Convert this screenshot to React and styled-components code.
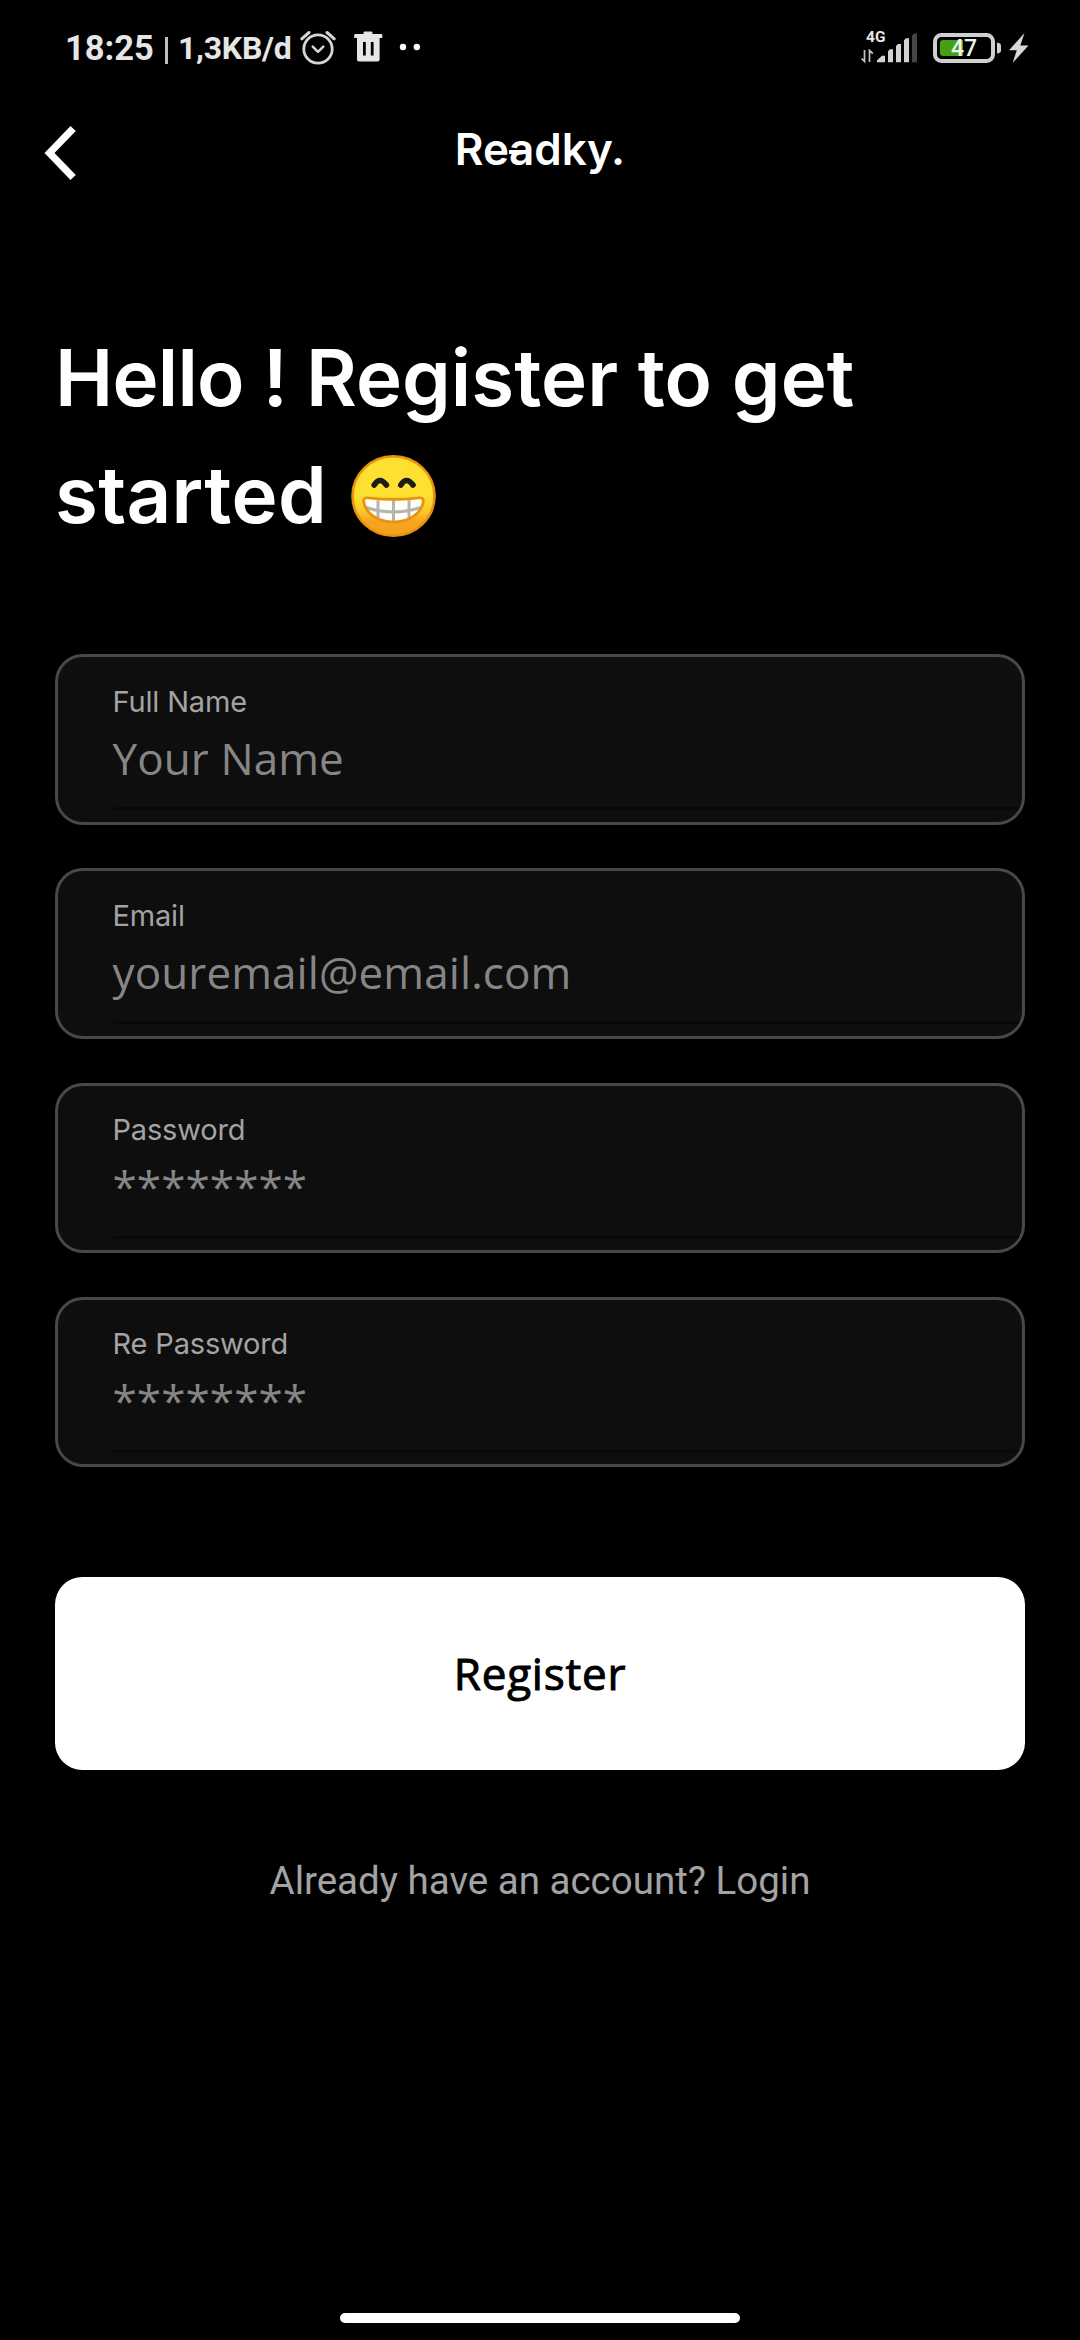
import React from "react";
import styled, { createGlobalStyle } from "styled-components";

const GlobalStyle = createGlobalStyle`
  *, *::before, *::after { box-sizing: border-box; }
  html, body { margin: 0; padding: 0; background: #000; }
`;

const Screen = styled.div`
  width: 1080px;
  height: 2340px;
  display: flex;
  flex-direction: column;
  background: #000;
  color: #fff;
  overflow: hidden;
  font-family: Inter, "Liberation Sans", sans-serif;
`;

const StatusBar = styled.div`
  height: 96px;
  flex: none;
  padding: 0 51px 0 65px;
  display: flex;
  justify-content: space-between;
  color: #e6e6e6;
  font-family: Roboto, "Liberation Sans", sans-serif;
`;

const StatusGroup = styled.div`
  height: 96px;
  display: flex;
  align-items: center;
`;

const StatusText = styled.span`
  font-size: ${(p) => p.$size}px;
  font-weight: 700;
  line-height: 40px;
  width: ${(p) => p.$width}px;
  margin-left: ${(p) => p.$gap || 0}px;
  letter-spacing: ${(p) => p.$spacing || 0}px;
  white-space: nowrap;
`;

const StatusDivider = styled.span`
  width: 3px;
  height: 27px;
  margin: 5px 0 0 10px;
  background: #bdbdbd;
`;

const StatusIcon = styled.svg`
  display: block;
  flex: none;
  margin-left: ${(p) => p.$gap || 0}px;
  margin-bottom: ${(p) => p.$lift || 0}px;
`;

const Network = styled.div`
  width: 58px;
  height: 32px;
  display: grid;
`;

const NetworkType = styled.span`
  grid-area: 1 / 1;
  padding-left: 6px;
  font-size: 15.5px;
  font-weight: 700;
  line-height: 11px;
`;

const NetworkBars = styled.svg`
  grid-area: 1 / 1;
  display: block;
`;

const Battery = styled.div`
  width: 69px;
  height: 30px;
  margin-left: 15px;
  display: grid;
`;

const BatteryShell = styled.svg`
  grid-area: 1 / 1;
  display: block;
`;

const BatteryLevel = styled.span`
  grid-area: 1 / 1;
  z-index: 1;
  padding-left: 18px;
  color: #f0f5ec;
  font-size: 23px;
  font-weight: 500;
  line-height: 32px;
`;

const Header = styled.header`
  height: 110px;
  flex: none;
  display: grid;
  grid-template-columns: 120px 1fr 120px;
`;

const BackButton = styled.button`
  border: 0;
  padding: 30px 0 0 44px;
  background: none;
  display: flex;
  align-items: flex-start;
`;

const Logo = styled.div`
  padding-top: 26px;
  text-align: center;
  font-size: 44px;
  font-weight: 600;
  line-height: 54px;
`;

const LogoLetter = styled.span`
  position: relative;
  &::before {
    content: "";
    position: absolute;
    left: 0;
    top: 28px;
    width: 17px;
    height: 4px;
    background: #fff;
  }
`;

const Title = styled.h1`
  margin: 113px 55px 0;
  height: 234px;
  font-size: 78px;
  font-weight: 600;
  line-height: 117px;
  white-space: pre;
`;

const TitleLine = styled.span`
  display: flex;
  align-items: flex-start;
  height: 116.5px;
`;

const Word = styled.span`
  letter-spacing: ${(p) => p.$spacing}px;
`;

const Emoji = styled.svg`
  margin: 19.5px 0 0 24px;
`;

const Form = styled.form`
  margin: 101px 55px 0;
  display: flex;
  flex-direction: column;
`;

const Fields = styled.div`
  display: flex;
  flex-direction: column;
  gap: 43.8px;
`;

const FieldBox = styled.label`
  height: 170.5px;
  padding: 28.6px 0 0 54.5px;
  border: 3px solid #484848;
  border-radius: 28px;
  background: #0e0e0e;
  display: flex;
  flex-direction: column;
  overflow: hidden;
`;

const FieldLabel = styled.span`
  height: 32px;
  flex: none;
  color: #a3a3a3;
  font-size: 29px;
  letter-spacing: -0.17px;
  line-height: 32px;
`;

const FieldHint = styled.span`
  height: 92.5px;
  flex: none;
  border-bottom: 3px solid #080808;
  color: #868686;
  font-family: "Open Sans", "Noto Sans", sans-serif;
  font-size: 44px;
  letter-spacing: 0.1px;
  line-height: 81px;
  white-space: pre;
`;

const SubmitButton = styled.button`
  height: 193px;
  margin: 109.6px 0 0;
  padding: 0;
  border: 0;
  border-radius: 27.5px;
  background: #fff;
  color: #000;
  font-family: "Open Sans", "Noto Sans", sans-serif;
  font-size: 44px;
  font-weight: 400;
  letter-spacing: 0.8px;
  line-height: 60px;
  -webkit-text-stroke: 1px #000;
`;

const LoginPrompt = styled.p`
  margin: 87px 0 0;
  text-align: center;
  color: #a3a3a3;
  font-family: Roboto, "Liberation Sans", sans-serif;
  font-size: 38.5px;
  line-height: 48px;
`;

const HomeBar = styled.div`
  width: 400px;
  height: 10px;
  margin: auto auto 17px;
  border-radius: 5px;
  background: #fff;
`;

function AlarmIcon() {
  return (
    <StatusIcon $gap={8} width="36" height="36" viewBox="0 0 36 36" fill="none" stroke="#d6d6d6" strokeLinecap="round" strokeLinejoin="round">
      <circle cx="18" cy="19" r="14.2" strokeWidth="2.8" />
      <path d="M12.7 16.7 18 21.8l5.3-5.1" strokeWidth="2.500" />
      <path d="M1.8 8.8 9 2.500M34.2 8.8 27 2.500" strokeWidth="3" />
    </StatusIcon>
  );
}

function TrashIcon() {
  return (
    <StatusIcon $gap={18} $lift={2.4} width="29" height="31" viewBox="0 0 29 31" fill="#e6e6e6" fillRule="evenodd">
      <path d="M9.5 3V1.8Q9.5.5 11 .5h6q1.5 0 1.5 1.3V3H27q1.3 0 1.3 1.3V7H.2V4.3Q.2 3 1.5 3ZM3 7h22.600v21.500q0 2-2 2H5q-2 0-2-2ZM9 11v13.500h2.800V11ZM16.800 11v13.500h2.800V11Z" />
    </StatusIcon>
  );
}

function DotsIcon() {
  return (
    <StatusIcon $gap={15.5} $lift={2} width="22" height="8" viewBox="0 0 22 8" fill="#fff">
      <circle cx="4" cy="4" r="3.2" />
      <circle cx="17.800" cy="4" r="3.2" />
    </StatusIcon>
  );
}

function NetworkSignal() {
  return (
    <Network>
      <NetworkType>4G</NetworkType>
      <NetworkBars width="58" height="32" viewBox="0 0 58 32" fill="#d2d2d2">
        <path d="M4.500 18V29.500L1.500 26.500M9.500 30V18.500L12.800 21.500" fill="none" stroke="#c4c4c4" strokeWidth="1.700" />
        <path d="M17 30.300v-2l5-4.500h3V30.300ZM28 30.300V19.300l2-2h3V30.300ZM36 30.300V13.900l2-2h3V30.300ZM44 30.300V8.200l2-2h3V30.300Z" />
        <path d="M52 30.300V3.500L54 1.500h3V30.300Z" fill="#454545" />
      </NetworkBars>
    </Network>
  );
}

function BatteryStatus() {
  return (
    <Battery>
      <BatteryShell width="69" height="30" viewBox="0 0 69 30">
        <rect x="2" y="2" width="58" height="26" rx="6.500" fill="none" stroke="#cfcfcf" strokeWidth="4" />
        <path d="M10 7h20v16H10q-3 0-3-3V10q0-3 3-3Z" fill="#46a013" />
        <path d="M64 9.500q4 .5 4 3v5q0 2.500-4 3Z" fill="#cfcfcf" />
      </BatteryShell>
      <BatteryLevel>47</BatteryLevel>
    </Battery>
  );
}

function BoltIcon() {
  return (
    <StatusIcon $gap={7} width="20" height="30" viewBox="0 0 20 30" fill="#d8d8d8">
      <path d="M15.500 0 0 17.300h7.800L3.600 30 19.500 12.600H11.300Z" />
    </StatusIcon>
  );
}

function BackIcon() {
  return (
    <svg width="32" height="54" viewBox="0 0 32 54" fill="#fff">
      <path d="M.5 27 26.500 0 31.800 5 10.500 27 31.800 49 26.500 54Z" />
    </svg>
  );
}

function GrinEmoji() {
  return (
    <Emoji width="85" height="82" viewBox="0 0 85 82">
      <defs>
        <linearGradient id="face" x1="0" y1="0" x2="0" y2="1">
          <stop offset="0.500" stopColor="#fde030" />
          <stop offset="0.680" stopColor="#fcc92c" />
          <stop offset="0.820" stopColor="#f7a520" />
          <stop offset="1" stopColor="#f5a01e" />
        </linearGradient>
        <clipPath id="mouth">
          <path d="M14 46.500q0-2.300 2.800-2.200 25.700 3 51.400 0 2.800-.1 2.800 2.200C69.500 58 57 66 42.500 66S15.500 58 14 46.500Z" />
        </clipPath>
      </defs>
      <ellipse cx="42.500" cy="41" rx="41" ry="39.700" fill="url(#face)" stroke="#e8920f" strokeWidth="2.600" />
      <path d="M23.200 30q5.500-9 12.200 0M49.800 30q5.500-9 12.200 0" fill="none" stroke="#1c1c1a" strokeWidth="5.600" strokeLinecap="round" />
      <g clipPath="url(#mouth)">
        <rect x="12" y="42" width="61" height="25" fill="#fffef8" />
        <path d="M12 51.500q30.500 11 61 0M27 43v24M42.500 43v24M58 43v24" fill="none" stroke="#b5b5b0" strokeWidth="3" />
      </g>
      <path d="M12.500 46q0-3.500 4-3.200 26 3.200 52 0 4-.3 4 3.200C70.500 59 57.500 67 42.500 67S14.500 59 12.500 46Z" fill="none" stroke="#e8920f" strokeWidth="2.600" />
    </Emoji>
  );
}

function Field({ label, hint }) {
  return (
    <FieldBox>
      <FieldLabel>{label}</FieldLabel>
      <FieldHint>{hint}</FieldHint>
    </FieldBox>
  );
}

const fields = [
  { label: "Full Name", hint: "Your Name" },
  { label: "Email", hint: "youremail@email.com" },
  { label: "Password", hint: "********" },
  { label: "Re Password", hint: "********" },
];

export default function App() {
  return (
    <Screen>
      <GlobalStyle />
      <StatusBar>
        <StatusGroup>
          <StatusText $size={34.5} $width={90}>18:25</StatusText>
          <StatusDivider />
          <StatusText $size={32} $width={114} $gap={10} $spacing={-0.25}>1,3KB/d</StatusText>
          <AlarmIcon />
          <TrashIcon />
          <DotsIcon />
        </StatusGroup>
        <StatusGroup>
          <NetworkSignal />
          <BatteryStatus />
          <BoltIcon />
        </StatusGroup>
      </StatusBar>
      <Header>
        <BackButton type="button" aria-label="Back">
          <BackIcon />
        </BackButton>
        <Logo>
          Re<LogoLetter>a</LogoLetter>dky.
        </Logo>
      </Header>
      <Title>
        <TitleLine>
          <Word $spacing={-0.75}>Hello ! </Word>
          <Word $spacing={0.03}>Register to get</Word>
        </TitleLine>
        <TitleLine>
          <Word $spacing={0.35}>started</Word>
          <GrinEmoji />
        </TitleLine>
      </Title>
      <Form>
        <Fields>
          {fields.map((f) => (
            <Field key={f.label} {...f} />
          ))}
        </Fields>
        <SubmitButton type="button">Register</SubmitButton>
      </Form>
      <LoginPrompt>Already have an account? Login</LoginPrompt>
      <HomeBar />
    </Screen>
  );
}
